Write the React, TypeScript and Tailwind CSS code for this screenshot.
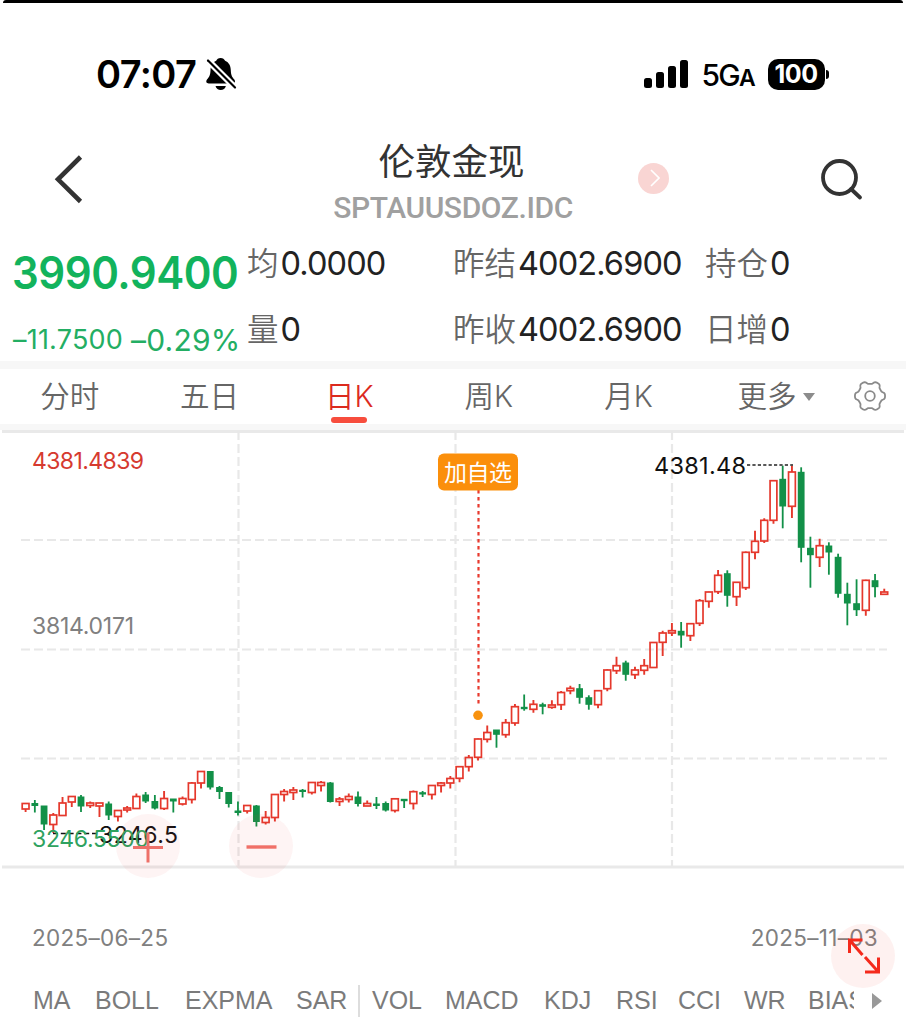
import { FC, ReactNode } from "react"

type TCandle = ["r" | "g", number, number, number, number]

// direction, high, body top, body bottom, low
const candles: TCandle[] = [
  ["r", 803, 803.5, 809, 812], ["g", 800, 803.5, 805.5, 812.5], ["g", 806, 806, 824, 830], ["r", 813, 815, 824.5, 833],
  ["r", 797, 803, 815.5, 815.5], ["r", 796.5, 796.5, 802, 807], ["g", 795, 797, 806, 812], ["r", 801.5, 803, 805.5, 808],
  ["r", 803, 803, 806, 817], ["g", 801.5, 804, 815, 820], ["r", 810.5, 810.5, 816.5, 821.5], ["r", 806, 808, 810, 812.5],
  ["r", 793.5, 796.5, 808.5, 809], ["g", 792, 795, 801, 803], ["g", 795, 801.5, 808, 809.5], ["r", 791, 798.5, 808.5, 810],
  ["g", 799, 799, 801, 812.5], ["r", 796.5, 798.5, 804, 805.5], ["r", 782, 783, 799.5, 803.5], ["r", 771, 771.5, 783, 788.5],
  ["g", 771, 771.5, 787, 789.5], ["g", 786, 787.5, 791.5, 799], ["g", 792, 792.5, 803.5, 807.5], ["g", 801.5, 811, 812.5, 815.5],
  ["r", 805.5, 805.5, 811, 813.5], ["g", 805, 806, 821.5, 826.5], ["r", 811, 817.5, 822.5, 824.5], ["r", 794, 794.5, 817.5, 821.5],
  ["r", 789, 791.5, 794.5, 801.5], ["r", 787, 790, 792.5, 800], ["g", 789, 790.3, 791.5, 797.5], ["r", 782, 782.5, 792.5, 794.5],
  ["r", 781, 782.5, 785.5, 791.5], ["g", 782, 783, 801.5, 802.5], ["r", 797, 799, 801.5, 806], ["r", 793.5, 796.5, 799.5, 802.5],
  ["g", 791.5, 797, 803.5, 806.5], ["r", 800.5, 803.5, 806, 806], ["g", 797, 804, 805.5, 809], ["g", 801.5, 803.5, 810, 811.5],
  ["r", 798.5, 798.8, 810.5, 812.5], ["g", 799, 799.3, 800.7, 808], ["r", 790.5, 791.7, 803.5, 809.5], ["g", 791, 792.7, 794, 797],
  ["r", 785, 785.5, 794.5, 799.5], ["r", 782, 783, 785.5, 792.5], ["r", 776, 778.5, 783, 788.5], ["r", 766.5, 766.7, 778.3, 782.3],
  ["r", 755, 757.5, 766.7, 771.5], ["r", 738.5, 739, 757.3, 760.5], ["r", 725.5, 732.5, 739.3, 742.5], ["g", 730, 730, 734.3, 747.7],
  ["r", 719, 722.7, 734.7, 737.7], ["r", 704, 706.7, 723, 725.7], ["g", 694.5, 707.3, 708.7, 710.7], ["r", 700, 704.3, 709.3, 712.7],
  ["g", 702.7, 704.7, 706.3, 714.3], ["r", 700.3, 705, 707.3, 708.7], ["r", 691, 692.5, 704.7, 710], ["r", 685.7, 688.3, 690.7, 694.3],
  ["g", 684, 688.7, 697.3, 703.7], ["g", 695.3, 697.7, 704.3, 709.7], ["r", 690.3, 690.7, 704.7, 708.3], ["r", 669.3, 670, 688.7, 691.3],
  ["r", 656.7, 665.7, 670.7, 674], ["g", 660.7, 663, 674.3, 680.7], ["r", 666.7, 670, 674.7, 679], ["r", 659, 665.7, 670.3, 674.7],
  ["r", 642, 642.5, 667.5, 668], ["r", 630.7, 633, 642.3, 656], ["r", 623, 630.7, 633, 636], ["g", 622, 631.3, 635, 647.7],
  ["r", 623.3, 623.7, 635.7, 641], ["r", 599, 600.7, 623.3, 626], ["r", 591.7, 592, 601.3, 607.7], ["r", 570, 575.3, 591.7, 594],
  ["g", 570.3, 573.7, 595.3, 606.7], ["r", 582, 582.3, 596.7, 606], ["r", 551.5, 552.3, 587.7, 590], ["r", 530.7, 541.3, 552.3, 559.3],
  ["r", 518.3, 520.3, 541, 543], ["r", 480.3, 480.7, 520.3, 523.7], ["g", 465.7, 479.3, 506, 528.3], ["r", 465.7, 472, 506.3, 518],
  ["g", 467.3, 472.3, 547.3, 562.3], ["g", 536.7, 548.3, 554.7, 587.7], ["r", 538.7, 545.7, 557.3, 567], ["g", 542.3, 546, 552, 574.7],
  ["g", 553.7, 557.3, 593.3, 597.7], ["g", 582.7, 594.3, 603, 625.3], ["g", 579.3, 603.7, 609.7, 616], ["r", 579.7, 580.3, 610.3, 615.7],
  ["g", 574, 580.7, 586.7, 597.3], ["r", 588.7, 592, 594.3, 594.3],
]

const quotes = [
  [{ label: "均", value: "0.0000" }, { label: "量", value: "0" }],
  [{ label: "昨结", value: "4002.6900" }, { label: "昨收", value: "4002.6900" }],
  [{ label: "持仓", value: "0" }, { label: "日增", value: "0" }],
]

const tabs = ["分时", "五日", "日K", "周K", "月K"]

const mainIndicators = [
  { name: "MA", width: "w-[38px]" },
  { name: "BOLL", width: "w-[66px]" },
  { name: "EXPMA", width: "w-[87px]" },
  { name: "SAR", width: "w-[50px]" },
]

const subIndicators = [
  { name: "VOL", width: "w-[49px]" },
  { name: "MACD", width: "w-[75px]" },
  { name: "KDJ", width: "w-[48px]" },
  { name: "RSI", width: "w-[38px]" },
  { name: "CCI", width: "w-[42px]" },
  { name: "WR", width: "w-[40px]" },
  { name: "BIAS", width: "w-[46px] overflow-hidden" },
]

const gearPath = Array.from({ length: 121 }, (_, i) => {
  const a = (i / 120) * Math.PI * 2
  const r = 13.6 + 1.5 * Math.tanh(2 * Math.cos(6 * a))
  return `${i ? "L" : "M"}${(17 + r * Math.cos(a)).toFixed(2)} ${(17 + r * Math.sin(a)).toFixed(2)}`
}).join("") + "Z"

const StatusBar: FC = () => (
  <div className="flex h-[117px] items-center pl-[96px] pr-[77px] pt-[25px] text-black">
    <span className="w-[109px] text-[38px] font-semibold leading-none tracking-[-0.6px]">07:07</span>
    <svg width="32" height="34" viewBox="205 57 32 34" className="-mt-[1px]">
      <path d="M220.6 58c-2.300 0-3.700 1.200-4.400 2.700-4 1.700-5.600 5.300-5.700 9.500-.1 5.300-1.500 6.700-3.500 9.400-1.400 1.900-.6 3.900 1.800 3.900h23.800c2.300 0 3.100-2 1.700-3.900-2-2.700-3.400-4.100-3.500-9.400-.1-4.200-1.700-7.800-5.700-9.500-.8-1.500-2.200-2.700-4.500-2.700z" />
      <path d="M215.500 86h10.400c-.7 2.400-2.700 4-5.200 4s-4.500-1.600-5.200-4z" />
      <path d="M208 60.500l27.500 27.500" stroke="#fff" strokeWidth="6.500" />
      <path d="M208 60.500l27 27" stroke="#000" strokeWidth="2.200" strokeLinecap="round" />
    </svg>
    <div className="ml-auto flex items-center">
      <div className="flex h-[28px] items-end gap-[4px]">
        <i className="h-[10px] w-[8px] rounded-[2.500px] bg-black" />
        <i className="h-[16px] w-[8px] rounded-[2.500px] bg-black" />
        <i className="h-[22px] w-[8px] rounded-[2.500px] bg-black" />
        <i className="h-[28px] w-[8px] rounded-[2.500px] bg-black" />
      </div>
      <span className="ml-[14px] w-[53px] whitespace-nowrap pt-[2px] text-[30px] font-medium leading-none tracking-[-1.800px]">
        5G<span className="text-[23px] font-semibold">A</span>
      </span>
      <span className="ml-[13px] flex h-[31px] w-[57px] items-center justify-center rounded-[10px] bg-black pt-px text-[25px] font-bold leading-none tracking-[-0.500px] text-white">
        100
      </span>
      <i className="ml-[1.500px] h-[9px] w-[3px] rounded-r-full bg-black" />
    </div>
  </div>
)

const Header: FC = () => (
  <div className="grid h-[120px] grid-cols-[333px_240px_1fr]">
    <svg width="40" height="60" viewBox="50 150 40 60" className="ml-[50px] mt-[30px]" fill="none" stroke="#333" strokeWidth="4.600">
      <path d="M80.500 157L58 179.300L80.500 201.500" />
    </svg>
    <div className="flex flex-col items-center">
      <h1 className="mr-[3px] mt-[19px] text-[36.500px] font-normal leading-[46px] text-[#333]">伦敦金现</h1>
      <p className="mt-[7px] whitespace-nowrap font-[Roboto] text-[30px] font-medium leading-[32px] tracking-[-0.400px] text-[#a0a0a0]">SPTAUUSDOZ.IDC</p>
    </div>
    <div className="flex items-start">
      <span className="ml-[65px] mt-[43px] flex size-[31px] items-center justify-center rounded-full bg-[#f9d5d3]">
        <svg width="10" height="18" viewBox="0 0 10 18" fill="none" stroke="#fff" strokeWidth="1.600" className="ml-[2px] -mt-[2px]">
          <path d="M1 1l8 8-8 8" />
        </svg>
      </span>
      <svg width="46" height="46" viewBox="819 157 46 46" className="ml-[150px] mt-[37px]" fill="none" stroke="#333" strokeWidth="3.800">
        <circle cx="839.500" cy="177.500" r="16.500" />
        <path d="M851 189l9 8.500" strokeLinecap="round" />
      </svg>
    </div>
  </div>
)

const QuotePanel: FC = () => (
  <div className="flex h-[121px]">
    <div className="w-[247px] whitespace-nowrap pl-[12px] pt-[8px]">
      <div className="w-[242px] origin-left scale-x-[0.935] text-[45px] font-semibold leading-[50px] tracking-[-0.500px] text-[#12b35c]">3990.9400</div>
      <div className="mt-[26px] flex h-[32px] items-center text-[#23ae63]">
        <span className="w-[118px] pl-px text-[27px] tracking-[0.200px]">–11.7500</span>
        <span className="pl-px text-[30px] tracking-[0.200px]">–0.29%</span>
      </div>
    </div>
    <div className="grid grid-cols-[206px_252px_1fr]">
      {quotes.map((column, i) => (
        <div key={i} className="pt-[2px]">
          {column.map(({ label, value }) => (
            <div key={label} className="mb-[22px] flex h-[44px] items-center whitespace-nowrap">
              <span className="text-[31.500px] font-[350] text-[#666]">{label}</span>
              <span className="ml-[2px] mt-px text-[32.500px] tracking-[-0.900px] text-[#222]">{value}</span>
            </div>
          ))}
        </div>
      ))}
    </div>
  </div>
)

const PeriodTabs: FC = () => (
  <div className="flex h-[55px] items-center text-[29.500px] font-[350] leading-none text-[#666]">
    {tabs.map((tab) => (
      <div key={tab} className={`relative w-[139.700px] text-center ${tab === "日K" ? "text-[#dc2a1e]" : ""}`}>
        {tab}
        {tab === "日K" && <i className="absolute -bottom-[12px] left-[52px] h-[6px] w-[36px] rounded-full bg-[#f74d3d]" />}
      </div>
    ))}
    <div className="ml-[39px] flex items-center">
      更多
      <i className="ml-[7px] border-x-[6px] border-t-[8px] border-x-transparent border-t-[#8c8c8c]" />
    </div>
    <svg width="34" height="34" viewBox="0 0 34 34" fill="none" stroke="#8a8a8a" strokeWidth="1.800" className="-mt-[2px] ml-[38px]">
      <path d={gearPath} />
      <circle cx="17" cy="17" r="4.800" />
    </svg>
  </div>
)

const Chart: FC = () => (
  <svg width="906" height="440" viewBox="0 430 906 440" className="block">
    <g stroke="#e9e9e9" strokeWidth="3">
      <path d="M2 431.500H904M2 867H904" />
    </g>
    <g stroke="#e8e8e8" strokeWidth="2.200" strokeDasharray="9 4" fill="none">
      <path d="M21 540H887M21 649.500H887M21 758.500H887" />
      <path d="M238.500 431V866M455.500 431V866M672 431V866" />
    </g>
    <text x="32" y="469" fontSize="23" fill="#d63a2f" textLength="112">4381.4839</text>
    <text x="32" y="634" fontSize="23" fill="#808080" textLength="102">3814.0171</text>
    {candles.map(([dir, high, top, bottom, low], i) => {
      const x = 25.6 + i * 9.233
      return dir === "r" ? (
        <g key={i} stroke="#e5382c" strokeWidth="1.700" fill="none">
          <path d={`M${x} ${high}V${top}M${x} ${bottom}V${low}`} strokeWidth="1.900" />
          <rect x={x - 3.400} y={top} width="6.800" height={bottom - top} />
        </g>
      ) : (
        <g key={i} fill="#129048">
          <rect x={x - 0.900} y={high} width="1.800" height={low - high} />
          <rect x={x - 3.400} y={top - 0.500} width="6.800" height={bottom - top + 1} />
        </g>
      )
    })}
    <path d="M53 833.500H98" stroke="#111" strokeWidth="1.600" strokeDasharray="5 2.800" />
    <text x="99" y="842.500" fontSize="23" fill="#111" textLength="79">3246.5</text>
    <text x="32" y="847" fontSize="23" fill="#2fa260" textLength="117">3246.5500</text>
    <path d="M747 465H793" stroke="#222" strokeWidth="1.600" strokeDasharray="3.200 2.200" />
    <text x="654" y="474" fontSize="23.500" fill="#111" textLength="92">4381.48</text>
    <path d="M478.500 490V706" stroke="#e8392e" strokeWidth="2.200" strokeDasharray="3.500 3.500" />
    <circle cx="478" cy="715.300" r="4.800" fill="#f8920f" />
    <rect x="438" y="453.500" width="80" height="37" rx="6" fill="#fb8f0b" />
    <text x="444" y="480.500" fontSize="23" fill="#fff" textLength="68">加自选</text>
  </svg>
)

const ZoomButton: FC<{ place: string; children: ReactNode }> = ({ place, children }) => (
  <button className={`absolute size-[64px] rounded-full ${place}`}>
    <svg width="64" height="64" viewBox="0 0 64 64" fill="none">{children}</svg>
  </button>
)

const App: FC = () => (
  <div className="h-[1024px] w-[906px] overflow-hidden bg-white font-[Inter,'Noto_Sans_CJK_SC',sans-serif]">
    <div className="mx-[3px] h-[3px] rounded-t-sm bg-black" />
    <StatusBar />
    <Header />
    <QuotePanel />
    <div className="h-[8px] bg-[#f7f7f7]" />
    <PeriodTabs />
    <div className="h-[6px] bg-[#f7f7f7]" />
    <div className="relative">
      <Chart />
      <ZoomButton place="left-[116px] top-[384px] bg-[#f5483c]/6">
        <path d="M17 33.500H47M32 18.500V48.500" stroke="#ee7068" strokeWidth="3" />
      </ZoomButton>
      <ZoomButton place="left-[229px] top-[384px] bg-[#f5483c]/6">
        <path d="M17.500 33H47.500" stroke="#f07068" strokeWidth="3.400" />
      </ZoomButton>
    </div>
    <div className="relative flex justify-between pl-[32px] pr-[28px] pt-[53px] text-[22.500px] leading-[30px] text-[#808080]">
      <span className="tracking-[0.300px]">2025–06–25</span>
      <span className="tracking-[0.300px]">2025–11–03</span>
      <ZoomButton place="left-[831px] top-[54px] bg-[#f5483c]/8">
        <g stroke="#f42a1c" strokeWidth="3">
          <path d="M18.500 29V16H31.500M18.500 16L31.500 31" />
          <path d="M34 33L47 47.500M47.500 33.500V48H34" />
        </g>
      </ZoomButton>
    </div>
    <div className="mt-[30px] flex h-[36px] items-center whitespace-nowrap pl-[33px] font-['Liberation_Sans'] text-[25px] text-[#7b7b7b]">
      <div className="flex gap-[24px]">
        {mainIndicators.map(({ name, width }) => <span key={name} className={width}>{name}</span>)}
      </div>
      <i className="mx-[12px] h-[32px] w-[2px] bg-[#ddd]" />
      <div className="flex gap-[24px]">
        {subIndicators.map(({ name, width }) => <span key={name} className={width}>{name}</span>)}
      </div>
      <i className="ml-[18px] border-y-[8px] border-l-[10px] border-y-transparent border-l-[#999]" />
    </div>
  </div>
)

export default App
